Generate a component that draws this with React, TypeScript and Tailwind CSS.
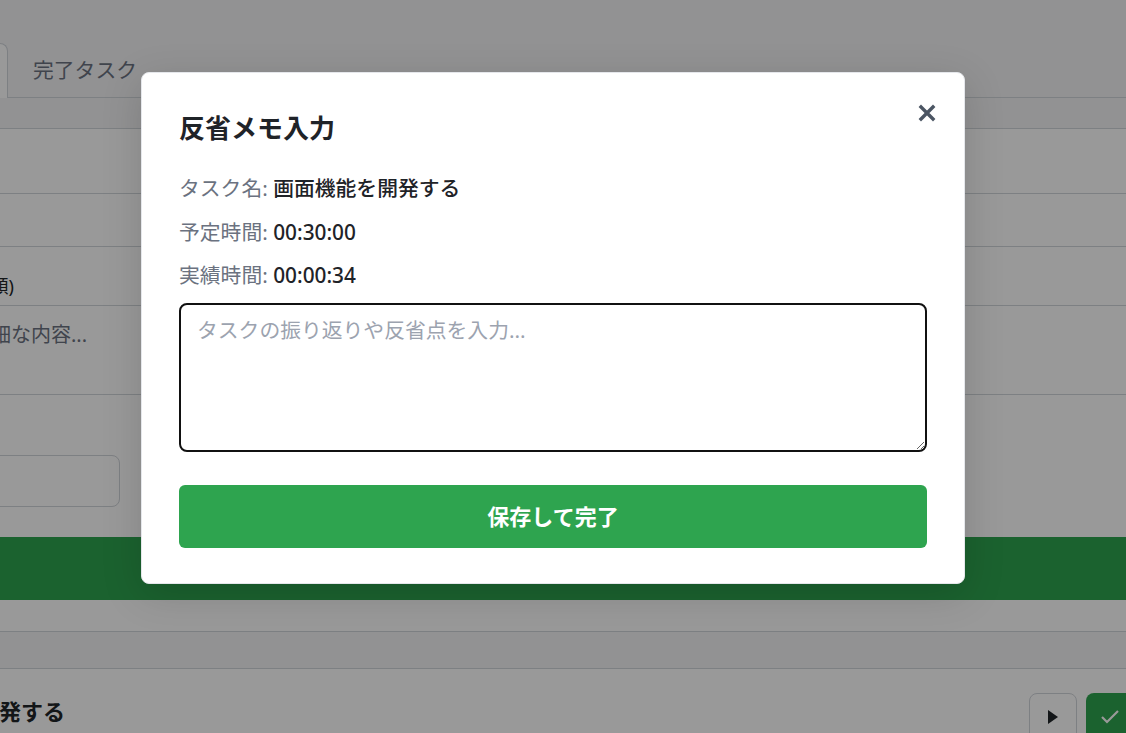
import React from 'react';

const Backdrop: React.FC = () => (
  <div className="ml-[-160px] w-[1321px] pt-[43px]">
    {/* Tabs */}
    <div className="flex h-[55px] border-b border-[#d1d5db]">
      <div className="-mb-px flex h-[55px] w-[168px] items-center justify-center rounded-t-[8px] border border-b-0 border-[#d1d5db] bg-white text-[20.8px] text-[#212529]">
        未完了タスク
      </div>
      <div className="flex items-center pl-[25px] pr-6 pt-[2px] text-[20.8px] text-[#6b7280]">完了タスク</div>
    </div>

    {/* Form card */}
    <div className="mt-[30px] border-y border-[#d1d5db] bg-white">
      <div className="h-[65px] border-b border-[#d1d5db]" />
      <div className="h-[53px] border-b border-[#d1d5db]" />
      <div className="flex h-[59px] items-end border-b border-[#d1d5db] pb-[6px] pl-[91px]">
        <span className="text-[18px] leading-[26px] text-[#212529]">単価(金額)</span>
      </div>
      <div className="h-[89px] border-b border-[#d1d5db] pl-[131px] pt-[14px]">
        <span className="text-[20px] leading-[30px] text-[#6b7280]">詳細な内容...</span>
      </div>
      <div className="h-[142px] pl-[116px] pt-[60px]">
        <div className="h-[52px] w-[164px] rounded-[8px] border border-[#d1d5db] bg-white" />
      </div>
      <div className="flex h-[63px] items-center justify-center bg-[#2ea44f] text-[20px] font-bold text-white">
        タスクを追加
      </div>
      <div className="h-[31px]" />
    </div>

    {/* Task item */}
    <div className="mt-[36px] border-t border-[#d1d5db] bg-white">
      <div className="flex items-start justify-between px-[27px] pt-[24px]">
        <h3 className="text-[22px] font-bold leading-[36px] text-[#212529]">画面機能を開発する</h3>
        <div className="flex gap-[9px]">
          <button className="flex h-[48px] w-[48px] items-center justify-center rounded-[8px] border border-[#d1d5db] bg-white">
            <svg width="12" height="14" viewBox="0 0 12 14">
              <path d="M1 0 L11 7 L1 14 Z" fill="#212529" />
            </svg>
          </button>
          <button className="flex h-[48px] w-[48px] items-center justify-center rounded-[8px] bg-[#2ea44f]">
            <svg width="20" height="16" viewBox="0 0 20 16" fill="none" stroke="white" strokeWidth="2.2">
              <path d="M2 8 L7 13 L18 2" />
            </svg>
          </button>
        </div>
      </div>
    </div>
  </div>
);

const ReflectionModal: React.FC = () => (
  <div className="absolute inset-0 flex items-start bg-black/40 pl-[141px] pt-[72px]">
    <div className="relative flex w-[824px] flex-col rounded-[8px] border border-[#e5e7eb] bg-white px-[37px] pb-[35px] pt-[39px] shadow-[0_10px_40px_rgba(0,0,0,0.15)]">
      {/* Close */}
      <button className="absolute left-[775px] top-[30px] flex h-[20px] w-[20px] items-center justify-center">
        <svg width="18" height="18" viewBox="0 0 18 18" fill="none" stroke="#4b5563" strokeWidth="3.4" strokeLinecap="square">
          <path d="M3 3 L15 15 M15 3 L3 15" />
        </svg>
      </button>

      <h2 className="text-[26px] font-bold leading-[32px] text-[#1f2328]">反省メモ入力</h2>

      <p className="mt-[29px] text-[20.8px] leading-[30px]">
        <span className="text-[#6b7280]">タスク名:</span>{' '}
        <span className="font-medium text-[#1f2328]">画面機能を開発する</span>
      </p>
      <p className="mt-[14px] text-[20.8px] leading-[30px]">
        <span className="text-[#6b7280]">予定時間:</span>{' '}
        <span className="font-medium text-[#1f2328]">00:30:00</span>
      </p>
      <p className="mt-[13px] text-[20.8px] leading-[30px]">
        <span className="text-[#6b7280]">実績時間:</span>{' '}
        <span className="font-medium text-[#1f2328]">00:00:34</span>
      </p>

      <textarea
        autoFocus
        placeholder="タスクの振り返りや反省点を入力..."
        className="mt-[13px] h-[149px] w-full resize-y rounded-[8px] border-2 border-[#111111] px-4 py-[10px] text-[20.8px] leading-[30px] text-[#1f2328] outline-none placeholder:text-[#9ca3af]"
      />

      <button className="mt-[33px] h-[63px] w-full rounded-[6px] bg-[#2ea44f] text-[22px] font-bold text-white">
        保存して完了
      </button>
    </div>
  </div>
);

export default function App() {
  return (
    <div className="relative h-[733px] w-[1126px] overflow-hidden bg-[#f3f4f6] font-['Noto_Sans','Noto_Sans_CJK_JP',sans-serif]">
      <Backdrop />
      <ReflectionModal />
    </div>
  );
}
